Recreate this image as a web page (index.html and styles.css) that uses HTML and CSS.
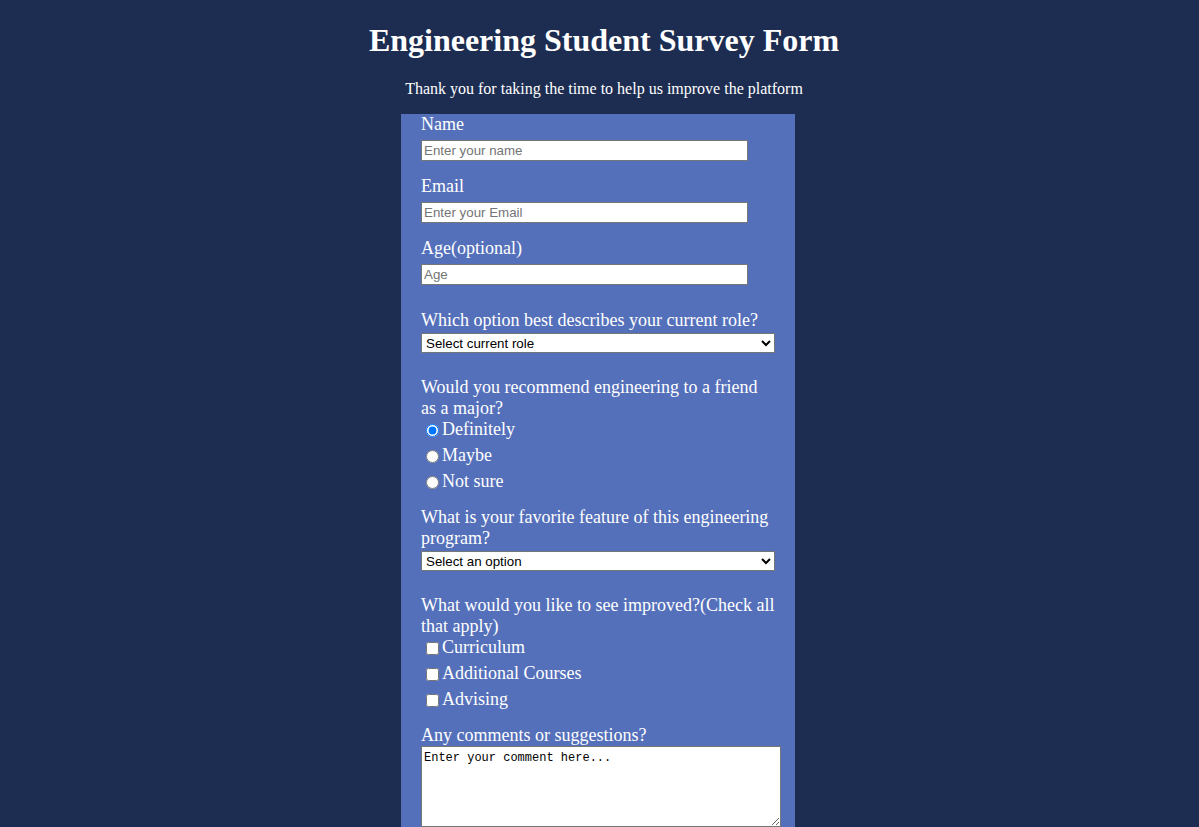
FILE: index.html
```html
<!DOCTYPE html>
<html lang="en">
<head>
<meta charset="utf-8">
<title>Engineering Student Survey Form</title>
<link rel="stylesheet" href="styles.css">
</head>
<body>
<h1 class="title">Engineering Student Survey Form</h1>
<p class="description">Thank you for taking the time to help us improve the platform</p>
<form class="survey">
  <div class="field field-text">
    <label class="label" for="name">Name</label>
    <input class="text-input" id="name" type="text" placeholder="Enter your name">
  </div>
  <div class="field field-text">
    <label class="label" for="email">Email</label>
    <input class="text-input" id="email" type="email" placeholder="Enter your Email">
  </div>
  <div class="field field-age">
    <label class="label" for="age">Age(optional)</label>
    <input class="text-input" id="age" type="number" placeholder="Age">
  </div>
  <div class="field field-section">
    <label class="label" for="role">Which option best describes your current role?</label>
    <select class="select" id="role">
      <option>Select current role</option>
      <option>Student</option>
      <option>Full Time Job</option>
      <option>Prefer not to say</option>
    </select>
  </div>
  <div class="field field-group">
    <p class="label">Would you recommend engineering to a friend as a major?</p>
    <label class="choice"><input class="radio" type="radio" name="recommend" checked>Definitely</label>
    <label class="choice"><input class="radio" type="radio" name="recommend">Maybe</label>
    <label class="choice"><input class="radio" type="radio" name="recommend">Not sure</label>
  </div>
  <div class="field field-section">
    <label class="label" for="feature">What is your favorite feature of this engineering program?</label>
    <select class="select" id="feature">
      <option>Select an option</option>
      <option>Professors</option>
      <option>Labs</option>
      <option>Community</option>
    </select>
  </div>
  <div class="field field-group">
    <p class="label">What would you like to see improved?(Check all that apply)</p>
    <label class="choice"><input class="checkbox" type="checkbox">Curriculum</label>
    <label class="choice"><input class="checkbox" type="checkbox">Additional Courses</label>
    <label class="choice"><input class="checkbox" type="checkbox">Advising</label>
  </div>
  <div class="field">
    <label class="label" for="comments">Any comments or suggestions?</label>
    <textarea class="comments" id="comments">Enter your comment here...</textarea>
  </div>
  <button class="submit" type="submit">Submit</button>
</form>
</body>
</html>
```

FILE: styles.css
```css
html {
  background: #1d2d51;
}

body {
  margin: 8px;
  background: #1d2d51;
  color: #ffffff;
  font-family: "Liberation Serif", "Times New Roman", serif;
}

.title {
  margin: 14px 0 0;
  padding-left: 9px;
  text-align: center;
  font-size: 32px;
  font-weight: bold;
}

.description {
  margin: 21px 0 16px;
  padding-left: 9px;
  text-align: center;
  font-size: 16px;
}

.survey {
  width: 354px;
  margin: 0 auto 0 calc(50% - 198.5px);
  padding: 0 20px 20px;
  background: #5570ba;
}

.field {
  display: flex;
  flex-direction: column;
  align-items: flex-start;
  font-size: 18px;
}

.field-text {
  margin-bottom: 15px;
}

.field-age {
  margin-bottom: 25px;
}

.field-section {
  margin-bottom: 24px;
}

.field-group {
  margin-bottom: 15px;
}

.label {
  display: block;
  margin: 0;
  font-size: 18px;
  line-height: normal;
}

.text-input {
  box-sizing: border-box;
  width: 327px;
  height: 21px;
  margin: 5px 0 0;
  padding: 1px 2px;
  border: 1px solid #767676;
  background: #ffffff;
  font-family: "Liberation Sans", Arial, sans-serif;
  font-size: 13.33px;
  color: #000000;
}

.text-input::placeholder {
  color: #757575;
}

.select {
  box-sizing: border-box;
  width: 354px;
  height: 20px;
  margin: 2px 0 0;
  padding: 0;
  border: 1px solid #767676;
  border-radius: 0;
  background: #ffffff;
  font-family: "Liberation Sans", Arial, sans-serif;
  font-size: 13.33px;
  color: #000000;
}

.choice {
  display: flex;
  align-items: center;
  height: 21px;
  margin: 0 0 5px;
  font-size: 18px;
}

.choice:last-child {
  margin-bottom: 0;
}

.radio,
.checkbox {
  width: 13px;
  height: 13px;
  margin: 2px 3px 0 5px;
}

.comments {
  box-sizing: border-box;
  width: 360px;
  height: 81px;
  margin: 0;
  padding: 4px 2px 2px;
  border: 1px solid #767676;
  background: #ffffff;
  font-family: "Liberation Mono", "Courier New", monospace;
  font-size: 12px;
  color: #000000;
  resize: both;
}

.submit {
  margin-top: 16px;
  font-family: "Liberation Sans", Arial, sans-serif;
  font-size: 13.33px;
}
```
